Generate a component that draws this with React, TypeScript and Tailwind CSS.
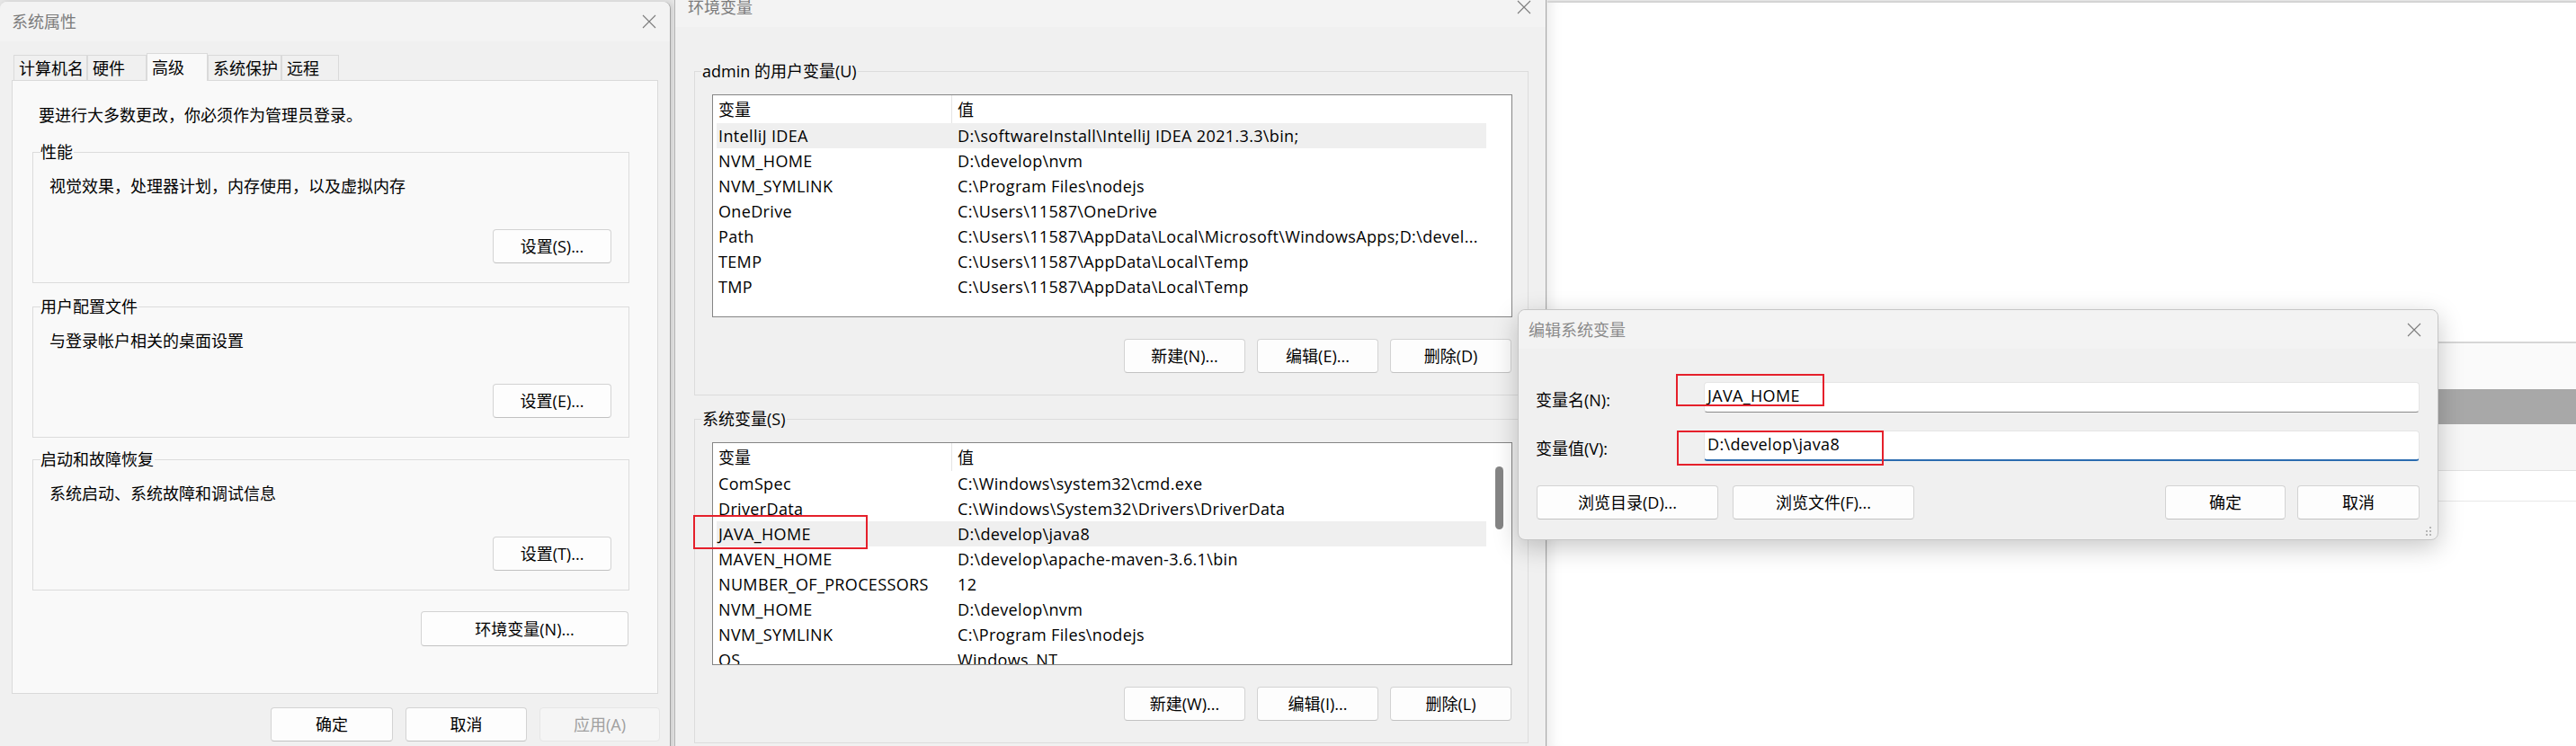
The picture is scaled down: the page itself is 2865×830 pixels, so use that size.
import React from 'react'
import clsx from 'clsx'

type Row = [string, string]

const userVars: Row[] = [
  ['IntelliJ IDEA', 'D:\\softwareInstall\\IntelliJ IDEA 2021.3.3\\bin;'],
  ['NVM_HOME', 'D:\\develop\\nvm'],
  ['NVM_SYMLINK', 'C:\\Program Files\\nodejs'],
  ['OneDrive', 'C:\\Users\\11587\\OneDrive'],
  ['Path', 'C:\\Users\\11587\\AppData\\Local\\Microsoft\\WindowsApps;D:\\devel...'],
  ['TEMP', 'C:\\Users\\11587\\AppData\\Local\\Temp'],
  ['TMP', 'C:\\Users\\11587\\AppData\\Local\\Temp'],
]

const sysVars: Row[] = [
  ['ComSpec', 'C:\\Windows\\system32\\cmd.exe'],
  ['DriverData', 'C:\\Windows\\System32\\Drivers\\DriverData'],
  ['JAVA_HOME', 'D:\\develop\\java8'],
  ['MAVEN_HOME', 'D:\\develop\\apache-maven-3.6.1\\bin'],
  ['NUMBER_OF_PROCESSORS', '12'],
  ['NVM_HOME', 'D:\\develop\\nvm'],
  ['NVM_SYMLINK', 'C:\\Program Files\\nodejs'],
  ['OS', 'Windows_NT'],
]

function CloseX() {
  return (
    <svg width="16" height="16" viewBox="0 0 16 16" className="shrink-0">
      <path d="M1 1L15 15M15 1L1 15" stroke="#7c7c7c" strokeWidth="1.1" fill="none" />
    </svg>
  )
}

function Btn({ children, w, h = 'h-[38px]', disabled }: { children: React.ReactNode; w: string; h?: string; disabled?: boolean }) {
  return (
    <button
      type="button"
      className={clsx(
        'flex shrink-0 items-center justify-center rounded-[4px] border',
        w,
        h,
        disabled
          ? 'border-[#e6e6e6] bg-[#f5f5f5] text-[#a0a0a0]'
          : 'border-[#d3d3d3] border-b-[#c2c2c2] bg-[#fdfdfd] text-black',
      )}
    >
      {children}
    </button>
  )
}

// groupbox on the 系统属性 tab page
function PerfGroup({ label, text, btn, className }: { label: string; text: string; btn: string; className: string }) {
  return (
    <div className={clsx('h-[146px] border border-[#dcdcdc] pl-[8px] pr-[19px]', className)}>
      <div className="-mt-[13px] flex h-[24px] w-fit items-center bg-[#f9f9f9] pr-[1px]">{label}</div>
      <div className="mt-[14px] flex h-[24px] items-center pl-[10px]">{text}</div>
      <div className="mt-[36px] flex justify-end">
        <Btn w="w-[132px]">{btn}</Btn>
      </div>
    </div>
  )
}

function VarList({ rows, selected, thumb }: { rows: Row[]; selected: number; thumb?: boolean }) {
  return (
    <div className="ml-[12px] mt-[14px] flex h-[248px] overflow-hidden border border-[#858585] bg-white">
      <div className="flex w-[860px] shrink-0 flex-col">
        <div className="flex h-[31px] shrink-0">
          <div className="flex w-[266px] items-center border-r border-[#e5e5e5] pl-[6px]">变量</div>
          <div className="flex flex-1 items-center pl-[6px]">值</div>
        </div>
        {rows.map(([k, v], i) => (
          <div
            key={k + i}
            className={clsx(
              'ml-[4px] flex h-[28px] shrink-0 items-center whitespace-nowrap tracking-[0.35px]',
              i === selected && 'bg-[#efefef]',
            )}
          >
            <div className="w-[262px] shrink-0 pl-[2px]">{k}</div>
            <div className="overflow-hidden pl-[6px]">{v}</div>
          </div>
        ))}
      </div>
      <div className="flex-1">
        {thumb && <div className="ml-[10px] mt-[26px] h-[70px] w-[9px] rounded-full bg-[#858585]" />}
      </div>
    </div>
  )
}

function VarGroup({ label, rows, selected, thumb, btns, className }: {
  label: string
  rows: Row[]
  selected: number
  thumb?: boolean
  btns: string[]
  className: string
}) {
  return (
    <div className={clsx('h-[361px] border border-[#dcdcdc] pl-[7px] pr-[17px]', className)}>
      <div className="-mt-[13px] flex h-[24px] w-fit items-center bg-[#f0f0f0] px-[1px]">{label}</div>
      <VarList rows={rows} selected={selected} thumb={thumb} />
      <div className="mr-[1px] mt-[24px] flex justify-end gap-[13px]">
        {btns.map((b) => (
          <Btn key={b} w="w-[135px]">{b}</Btn>
        ))}
      </div>
    </div>
  )
}

function SystemProps() {
  const tabs = [
    { t: '计算机名', w: 'w-[82px]' },
    { t: '硬件', w: 'w-[66px]' },
    { t: '高级', w: 'w-[68px]', active: true },
    { t: '系统保护', w: 'w-[82px]' },
    { t: '远程', w: 'w-[64px]' },
  ]
  return (
    <div className="absolute left-0 top-[2px] flex h-[860px] w-[746px] flex-col rounded-t-[8px] border-r border-[#a2a2a2] bg-[#f0f0f0] shadow-[2px_0_6px_rgba(0,0,0,0.12)]">
      <div className="flex h-[44px] shrink-0 items-center justify-between rounded-t-[8px] bg-[#f3f3f3] pl-[13px] pr-[15px] text-[#7b7b7b]">
        <span>系统属性</span>
        <CloseX />
      </div>
      <div className="px-[13px] pt-[13px]">
        <div className="ml-[2px] flex h-[30px] items-end">
          {tabs.map((tab) => (
            <div
              key={tab.t}
              className={clsx(
                'flex items-center border border-b-0 border-[#dadada] pl-[5px]',
                tab.w,
                tab.active ? 'relative z-10 -mb-px h-[31px] bg-[#f9f9f9]' : 'h-[28px] bg-[#f0f0f0]',
              )}
            >
              {tab.t}
            </div>
          ))}
        </div>
        <div className="h-[683px] border border-[#dadada] bg-[#f9f9f9] pl-[22px] pr-[31px]">
          <div className="ml-[7px] mt-[26px] flex h-[24px] items-center">要进行大多数更改，你必须作为管理员登录。</div>
          <PerfGroup className="mt-[29px]" label="性能" text="视觉效果，处理器计划，内存使用，以及虚拟内存" btn="设置(S)..." />
          <PerfGroup className="mt-[26px]" label="用户配置文件" text="与登录帐户相关的桌面设置" btn="设置(E)..." />
          <PerfGroup className="mt-[24px]" label="启动和故障恢复" text="系统启动、系统故障和调试信息" btn="设置(T)..." />
          <div className="mr-[1px] mt-[23px] flex justify-end">
            <Btn w="w-[231px]" h="h-[39px]">环境变量(N)...</Btn>
          </div>
        </div>
        <div className="-mr-[2px] mt-[15px] flex justify-end gap-[14px]">
          <Btn w="w-[136px]">确定</Btn>
          <Btn w="w-[135px]">取消</Btn>
          <Btn w="w-[134px]" disabled>应用(A)</Btn>
        </div>
      </div>
    </div>
  )
}

function EnvVars() {
  return (
    <div className="absolute left-[750px] top-[-14px] flex h-[870px] w-[970px] flex-col border-x border-l-[#b4b4b4] border-r-[#a8a8a8] bg-[#f0f0f0]">
      <div className="flex h-[44px] shrink-0 items-center justify-between bg-[#f3f3f3] pl-[14px] pr-[16px] text-[#7b7b7b]">
        <span>环境变量</span>
        <CloseX />
      </div>
      <div className="pl-[21px] pr-[19px]">
        <VarGroup
          className="mt-[49px]"
          label="admin 的用户变量(U)"
          rows={userVars}
          selected={0}
          btns={['新建(N)...', '编辑(E)...', '删除(D)']}
        />
        <VarGroup
          className="mt-[26px]"
          label="系统变量(S)"
          rows={sysVars}
          selected={2}
          thumb
          btns={['新建(W)...', '编辑(I)...', '删除(L)']}
        />
      </div>
    </div>
  )
}

function EditVar() {
  return (
    <div className="absolute left-[1688px] top-[344px] flex h-[257px] w-[1024px] flex-col rounded-[8px] border border-[#c6c6c6] bg-[#f0f0f0] shadow-[0_8px_28px_rgba(0,0,0,0.22)]">
      <div className="flex h-[43px] shrink-0 items-center justify-between rounded-t-[8px] bg-[#f3f3f3] pl-[11px] pr-[18px] text-[#8a8a8a]">
        <span>编辑系统变量</span>
        <CloseX />
      </div>
      <div className="pl-[19px] pr-[20px] pt-[37px]">
        <div className="flex h-[34px] items-center">
          <div className="w-[187px] shrink-0 pt-[6px]">变量名(N):</div>
          <div className="flex h-full flex-1 items-center rounded-[4px] border border-[#e5e5e5] border-b-[#8a8a8a] bg-white pb-[4px] pl-[3px] tracking-[0.35px]">
            JAVA_HOME
          </div>
        </div>
        <div className="mt-[20px] flex h-[34px] items-center">
          <div className="w-[187px] shrink-0 pt-[6px]">变量值(V):</div>
          <div className="flex h-full flex-1 items-center rounded-[4px] border border-b-2 border-[#e5e5e5] border-b-[#2b6cb0] bg-white pb-[4px] pl-[3px] tracking-[0.35px]">
            D:\develop\java8
          </div>
        </div>
        <div className="ml-[1px] mt-[27px] flex">
          <div className="flex gap-[16px]">
            <Btn w="w-[202px]">浏览目录(D)...</Btn>
            <Btn w="w-[202px]">浏览文件(F)...</Btn>
          </div>
          <div className="ml-auto flex gap-[13px]">
            <Btn w="w-[134px]">确定</Btn>
            <Btn w="w-[136px]">取消</Btn>
          </div>
        </div>
      </div>
      <svg width="8" height="10" viewBox="0 0 8 10" className="absolute bottom-[4px] right-[6px]">
        <rect x="5" y="0" width="2" height="2" fill="#b5b5b5" />
        <rect x="5" y="4" width="2" height="2" fill="#b5b5b5" />
        <rect x="1" y="4" width="2" height="2" fill="#b5b5b5" />
        <rect x="5" y="8" width="2" height="2" fill="#b5b5b5" />
        <rect x="1" y="8" width="2" height="2" fill="#b5b5b5" />
      </svg>
    </div>
  )
}

function RedBox({ className }: { className: string }) {
  return <div className={clsx('absolute border-2 border-[#e5202b]', className)} />
}

export default function App() {
  return (
    <div className="relative h-[830px] w-[2865px] overflow-hidden bg-[#e6e6e6] font-[family-name:'Open_Sans','Noto_Sans_CJK_SC',sans-serif] text-[18px] leading-[24px] text-black">
      {/* window in the background on the right */}
      <div className="absolute bottom-0 left-[1721px] right-0 top-[1px] border-t-2 border-[#d4d4d4] bg-white shadow-[inset_14px_0_16px_-12px_rgba(0,0,0,0.10)]">
        <div className="mt-[377px] h-[2px] bg-[#d6d6d6]" />
        <div className="h-[51px] bg-[#fafafa]" />
        <div className="h-[39px] bg-[#a8a8a8]" />
        <div className="h-[51px] bg-[#f6f6f6]" />
        <div className="h-px bg-[#e2e2e2]" />
        <div className="h-[33px] bg-white" />
        <div className="h-px bg-[#e8e8e8]" />
      </div>

      <SystemProps />
      <EnvVars />
      <EditVar />

      <RedBox className="left-[771px] top-[573px] h-[38px] w-[194px]" />
      <RedBox className="left-[1864px] top-[416px] h-[36px] w-[165px]" />
      <RedBox className="left-[1865px] top-[479px] h-[39px] w-[230px]" />
    </div>
  )
}
